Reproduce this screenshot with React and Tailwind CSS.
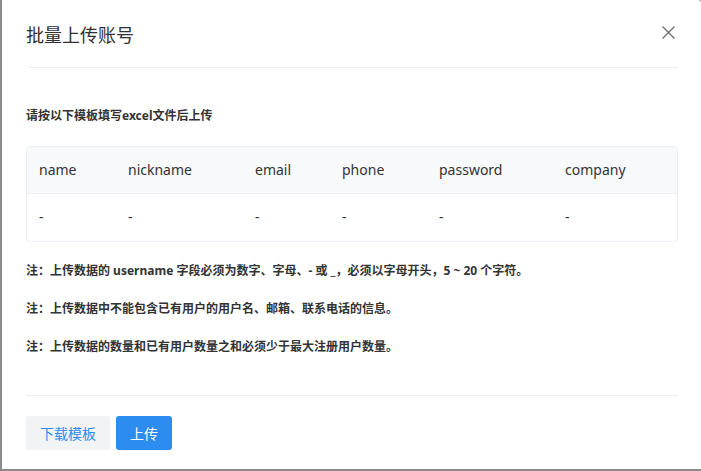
import React from "react";

const cols = [
  { k: "name", w: "w-[89px]" },
  { k: "nickname", w: "w-[127px]" },
  { k: "email", w: "w-[87px]" },
  { k: "phone", w: "w-[97px]" },
  { k: "password", w: "w-[126px]" },
  { k: "company", w: "" },
];

export default function App() {
  return (
    <div
      className="w-[701px] h-[471px] bg-[#8a8a8a] pl-[2px] pb-[2px] overflow-hidden"
      style={{ fontFamily: '"Noto Sans", "Noto Sans CJK SC", sans-serif' }}
    >
      <div className="w-full h-full bg-white rounded-tr-[3px] px-[26px] pr-[23px] flex flex-col">
        <div className="h-[68px] flex items-center justify-between border-b border-[#ebeef5] pr-0">
          <div className="text-[18px] text-[#303133] leading-none pt-[2px] -ml-[2px]">批量上传账号</div>
          <svg width="13" height="13" viewBox="0 0 13 13" className="mr-[3px] mt-[-2px]">
            <path d="M0.5 0.5 L12.5 12.5 M12.5 0.5 L0.5 12.5" stroke="#707070" strokeWidth="1.4" fill="none" />
          </svg>
        </div>
        <div className="-ml-[2px]">
          <div className="mt-[40px] text-[12px] font-bold text-[#333] leading-[16px]">
            请按以下模板填写excel文件后上传
          </div>
          <div className="mt-[22px] border border-[#ebeef5] rounded-[4px] overflow-hidden text-[14px] text-[#333]">
            <div className="flex h-[47px] pb-[2px] bg-[#f8f9fb] border-b border-[#ebeef5] items-center">
              {cols.map((c) => (
                <div key={c.k} className={`${c.w} ${c.w ? "shrink-0" : "flex-1"} pl-[12px]`}>{c.k}</div>
              ))}
            </div>
            <div className="flex h-[47px] pb-[2px] items-center">
              {cols.map((c) => (
                <div key={c.k} className={`${c.w} ${c.w ? "shrink-0" : "flex-1"} pl-[12px]`}>-</div>
              ))}
            </div>
          </div>
          <div className="mt-[21px] text-[12px] font-bold text-[#333] leading-[16px] flex flex-col gap-[22px]">
            <div>注：上传数据的 username 字段必须为数字、字母、- 或 _，必须以字母开头，5 ~ 20 个字符。</div>
            <div>注：上传数据中不能包含已有用户的用户名、邮箱、联系电话的信息。</div>
            <div>注：上传数据的数量和已有用户数量之和必须少于最大注册用户数量。</div>
          </div>
          <div className="mt-[40px] border-t border-[#ebeef5]" />
          <div className="mt-[20px] flex gap-[6px]">
            <button className="h-[34px] w-[84px] rounded-[3px] bg-[#f2f3f5] text-[14px] text-[#2d8cf0]">下载模板</button>
            <button className="h-[34px] w-[56px] rounded-[3px] bg-[#2d8cf0] text-[14px] text-white">上传</button>
          </div>
        </div>
      </div>
    </div>
  );
}
